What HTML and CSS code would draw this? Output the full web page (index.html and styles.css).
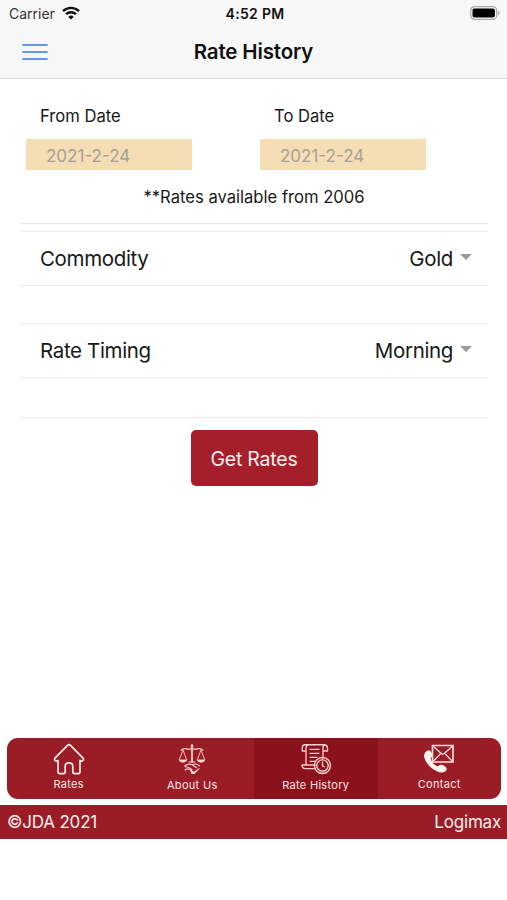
FILE: index.html
```html
<!DOCTYPE html>
<html lang="en">
<head>
<meta charset="utf-8">
<meta name="viewport" content="width=device-width, initial-scale=1">
<title>Rate History</title>
<link rel="stylesheet" href="styles.css">
</head>
<body>
<header class="header">
  <div class="status">
    <div class="carrier"><span>Carrier</span>
      <svg class="wifi" viewBox="0 0 18 14"><g fill="none" stroke="#111" stroke-width="2.4"><path d="M1 5.1a11.6 11.6 0 0 1 16 0"/><path d="M4.1 8.2a7.2 7.2 0 0 1 9.8 0"/></g><path d="M9 13.6 6.3 10.9a3.9 3.9 0 0 1 5.4 0Z" fill="#111"/></svg>
    </div>
    <span class="clock">4:52 PM</span>
    <svg class="battery" viewBox="0 0 31 14"><rect x=".8" y=".7" width="25.8" height="12.6" rx="3.6" fill="#f7f7f7" stroke="#aaa" stroke-width="1.2"/><rect x="2.5" y="2.4" width="22.4" height="9.2" rx="2" fill="#000"/><path d="M28.1 4.8c2.2.8 2.2 3.6 0 4.4Z" fill="#aaa"/></svg>
  </div>
  <div class="nav">
    <button class="menu" aria-label="Menu"><i></i><i></i><i></i></button>
    <h1>Rate History</h1>
    <span></span>
  </div>
</header>
<main class="content">
  <section class="dates">
    <div class="field"><span class="label">From Date</span><div class="date">2021-2-24</div></div>
    <div class="field"><span class="label to">To Date</span><div class="date">2021-2-24</div></div>
  </section>
  <p class="note">**Rates available from 2006</p>
  <div class="row commodity"><span class="name">Commodity</span><span class="value gold">Gold</span><i class="caret"></i></div>
  <div class="row timing"><span class="name rate">Rate Timing</span><span class="value">Morning</span><i class="caret"></i></div>
  <div class="divider"></div>
  <button class="submit">Get Rates</button>
</main>
<nav class="tabs">
  <a class="tab"><svg class="icon" viewBox="0 0 32 32"><path d="M2.2 14.8 14.5 2.3q1.5-1.5 3 0l12.3 12.5c2 2-.8 4.2-2.8 2.7v11.3q0 1.9-1.9 1.9h-3.4q-1.9 0-1.9-1.9v-5.6q0-3.3-3.8-3.3t-3.8 3.3v5.6q0 1.9-1.9 1.9H6.9q-1.9 0-1.9-1.9V17.5c-2 1.5-4.8-.7-2.8-2.7Z" fill="none" stroke="#ffece9" stroke-width="1.7" stroke-linejoin="round"/></svg><span>Rates</span></a>
  <a class="tab low"><svg class="icon" viewBox="0 0 32 32"><g fill="none" stroke="#f8d0ca" stroke-linecap="round" stroke-linejoin="round"><path d="M16 2v17" stroke-width="1.8"/><path d="M5 7.2C9 3.2 12 8 16 5.3c4 2.7 7-2.1 11 1.9M14.8 3h2.4M13 19h6" stroke-width="1.2"/><path d="m7 7-3.8 10h7.6L7 7m18 0-3.8 10h7.6L25 7" stroke-width=".9"/><path d="M8.5 23q4-3 7.5-1.3l4.5 3M16 21.8q4-2 7.5 1.2M9 27q3-2.4 6 .3l3 2.3 5-4M9.5 23.7q4 .2 6.5 3" stroke-width="1.1"/></g><path d="M2.8 17h8.4q-1.2 2.7-4.2 2.7T2.8 17m18 0h8.4q-1.2 2.7-4.2 2.7t-4.2-2.7M14 27l3.5 2 5-2.5-4 4.5h-3Z" fill="#f8d0ca"/></svg><span class="about">About Us</span></a>
  <a class="tab low active"><svg class="icon" viewBox="0 0 32 32"><g fill="none" stroke="#f8ceca" stroke-width="1.35" stroke-linejoin="round"><path d="M6 22V5.5Q6 1.7 9 1.7h-4Q2.2 1.7 2.2 5v3H6M9 1.7h15q3.5 0 3.5 3.8V8H23V5q0-3.3 2-3.3M23 8v6M6 22H2q0 3.6 3.5 3.6H15M6 22h9M9.5 6.3h10M9.5 10.3h10M9.5 14.3h8M9.5 18.3h5.5"/><circle cx="22.5" cy="22.5" r="8" fill="#8b121c"/><circle cx="22.5" cy="22.5" r="5.7"/><path d="M22.5 18.5v4.3l2.3 1.2M22.5 15.5v1.3m0 11.5v1.2M15.5 22.5h1.3m11.5 0h1.2"/></g></svg><span class="history">Rate History</span></a>
  <a class="tab"><svg class="icon" viewBox="0 0 32 32"><path d="M9.5 2.5H30V19H9.5Z" fill="#991c27" stroke="#ffe0dc" stroke-width="1.7"/><path d="m10.5 3.5 7.4 6.8q1.8 1.6 3.6 0L29 3.5M10.5 18l6.8-7m5 0 6.7 7" fill="none" stroke="#ffe0dc" stroke-width="1.3"/><path d="M5.8 7.3C2.2 8.1.4 11 1.2 14.5 3.8 22.2 9.3 27 16.3 29.2c3.3.9 6.6-.2 7.4-3 .1-2.3-3.9-4.8-6.1-4.5-1.5.2-1.6 2-3.4 1.5-3.1-1-5.8-4.7-6.5-7.8-.1-1.5 1.8-1.5 1.7-3-.1-1.6-1.5-4.8-3.6-5.1Z" fill="#fff3ef"/></svg><span class="contact">Contact</span></a>
</nav>
<footer class="footer"><span class="copyright">©JDA 2021</span><span class="brand">Logimax</span></footer>
</body>
</html>
```
FILE: styles.css
```css
* { box-sizing: border-box; }
body { margin: 0; width: 507px; height: 900px; display: flex; flex-direction: column; background: #fff; color: #181818; font-family: Inter, "Liberation Sans", sans-serif; overflow: hidden; }
button { border: 0; padding: 0; font: inherit; }
.header { height: 79px; background: #f7f7f7; border-bottom: 1px solid #dcdcdc; }
.status { height: 27px; padding: 0 6px 0 9px; display: grid; grid-template-columns: 1fr auto 1fr; align-items: center; font-size: 14px; }
.carrier { display: flex; align-items: center; gap: 7px; color: #333; }
.wifi { width: 18px; height: 14px; margin-top: -2px; }
.clock { font-weight: 600; color: #111; letter-spacing: .3px; }
.battery { width: 31px; height: 14px; justify-self: end; margin-top: -1px; }
.nav { height: 50px; display: grid; grid-template-columns: 1fr auto 1fr; align-items: center; padding: 0 22px; }
.menu { width: 26px; height: 16px; display: flex; flex-direction: column; justify-content: space-between; background: none; }
.menu i { height: 2px; width: 26px; border-radius: 1px; background: #6597ed; }
h1 { margin: 0; font-size: 20.5px; line-height: 24px; font-weight: 600; letter-spacing: -.15px; color: #111; }
.content { height: 659px; padding: 0 19px 0 20px; display: flex; flex-direction: column; }
.dates { display: grid; grid-template-columns: 234px 234px; padding-top: 25px; }
.label { display: block; padding-left: 20px; height: 35px; font-size: 16.6px; line-height: 24px; }
.date { width: 166px; height: 31px; margin-left: 6px; padding-left: 20px; background: #f5deb3; color: #a6a09a; font-size: 17px; line-height: 34px; }
.note { margin: 15px 0 0; height: 39px; text-align: center; font-size: 16.6px; line-height: 24px; border-bottom: 1px solid #e8e8e8; }
.row { display: flex; align-items: center; height: 55px; padding: 0 16px 0 20px; border-top: 1px solid #ececec; border-bottom: 1px solid #e8e8e8; font-size: 20.5px; letter-spacing: -.35px; }
.commodity { margin-top: 7px; }
.timing { margin-top: 37px; }
.name { flex: 1; }
.caret { margin: -4px 0 0 7px; border-left: 6px solid transparent; border-right: 6px solid transparent; border-top: 6px solid #999; }
.divider { height: 40px; border-bottom: 1px solid #e8e8e8; }
.submit { align-self: center; width: 127px; height: 56px; margin-top: 12px; padding-top: 1px; border-radius: 5px; background: #a51f2b; color: #fff0ed; font-size: 19.5px; letter-spacing: -.2px; }
.tabs { width: 494px; height: 61px; margin-left: 7px; display: grid; grid-template-columns: repeat(4, 1fr); border-radius: 11px; overflow: hidden; background: #991c27; }
.tab { display: flex; flex-direction: column; align-items: center; padding-top: 5px; color: #ffe5e1; font-size: 11px; line-height: 14px; }
.tab span { margin-top: 2px; letter-spacing: .3px; }
.tab.low span { margin-top: 3px; }
.active { background: #8b121c; }
.icon { width: 32px; height: 32px; }
.footer { height: 34px; margin-top: 6px; padding: 0 6px 0 7px; display: flex; justify-content: space-between; background: #991c27; color: #fff0ed; font-size: 17px; line-height: 34px; letter-spacing: -.2px; }
```
